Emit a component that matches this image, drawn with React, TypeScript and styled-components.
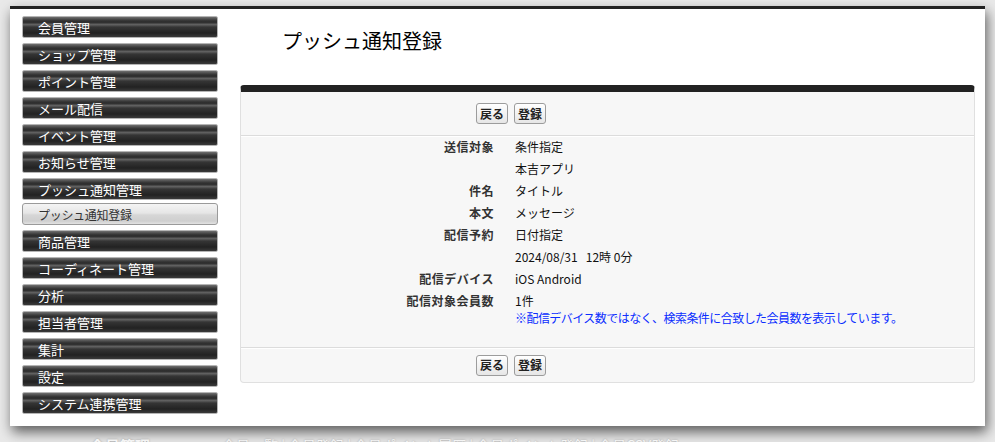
import React from "react";
import styled, { createGlobalStyle } from "styled-components";

const Global = createGlobalStyle`
  html, body { margin: 0; padding: 0; }
  body {
    background: #e9e9e9;
    font-family: "Noto Sans CJK JP", "Noto Sans", sans-serif;
    overflow: hidden;
  }
`;

const Page = styled.div`
  width: 995px;
  height: 442px;
  padding: 6px 0 0 10px;
  box-sizing: border-box;
  overflow: hidden;
`;

const Frame = styled.div`
  width: 975px;
  background: #fff;
  border-top: 3px solid #222;
  box-shadow: 2px 6px 12px rgba(0, 0, 0, 0.6);
  display: flex;
  gap: 22px;
  padding: 7px 10px 12px 12px;
  box-sizing: border-box;
`;

const Side = styled.nav`
  width: 196px;
  flex: none;
  display: flex;
  flex-direction: column;
  gap: 5px;
`;

const MenuItem = styled.div<{ $sub?: boolean }>`
  height: 22px;
  box-sizing: border-box;
  margin-top: ${(p) => (p.$sub ? "-2px" : "0")};
  border: 1px solid ${(p) => (p.$sub ? "#9a9a9a" : "#b5b5b5")};
  border-radius: ${(p) => (p.$sub ? "3px" : "2px")};
  padding-left: 15px;
  display: flex;
  align-items: center;
  white-space: nowrap;
  color: ${(p) => (p.$sub ? "#333" : "#fff")};
  font-size: ${(p) => (p.$sub ? "12px" : "13px")};
  letter-spacing: ${(p) => (p.$sub ? "-0.3px" : "0")};
  background: ${(p) =>
    p.$sub
      ? "linear-gradient(#f4f4f4 0%, #e6e6e6 45%, #d6d6d6 55%, #cfcfcf 85%, #e2e2e2 100%)"
      : "linear-gradient(#707070 0%, #3a3a3a 16%, #2a2a2a 26%, #626262 38%, #353535 50%, #222 80%, #3a3a3a 100%)"};
`;

const Main = styled.main`
  flex: 1;
  min-width: 0;
  display: flex;
  flex-direction: column;
`;

const Title = styled.h1`
  margin: 0;
  height: 69px;
  padding: 11px 0 0 42px;
  box-sizing: border-box;
  font-size: 20px;
  font-weight: normal;
  color: #000;
  line-height: 28px;
`;

const Panel = styled.section`
  background: #f7f7f7;
  border: 1px solid #e0e0e0;
  border-top: 7px solid #222;
  border-radius: 4px;
`;

const ButtonRow = styled.div<{ $bottom?: boolean }>`
  display: flex;
  gap: 6px;
  padding-left: 235px;
  align-items: center;
  height: ${(p) => (p.$bottom ? "34px" : "43px")};
  border-top: ${(p) => (p.$bottom ? "1px solid #dcdcdc" : "none")};
  border-bottom: ${(p) => (p.$bottom ? "none" : "1px solid #dcdcdc")};
  box-shadow: ${(p) => (p.$bottom ? "inset 0 1px 0 #fff" : "0 1px 0 #fff")};
`;

const Btn = styled.button`
  height: 21px;
  padding: 0 3px;
  font-family: "Noto Sans CJK JP", sans-serif;
  font-size: 12px;
  font-weight: bold;
  color: #222;
  background: linear-gradient(#ffffff, #e6e6e6);
  border: 1px solid #9c9c9c;
  border-radius: 3px;
  line-height: 18px;
`;

const Body = styled.div`
  display: grid;
  grid-template-columns: 253px 1fr;
  column-gap: 21px;
  padding: 0 0 23px 0;
  font-size: 12px;
  line-height: 22px;
  color: #111;
`;

const Label = styled.div`
  text-align: right;
  font-weight: bold;
  color: #333;
  letter-spacing: 0.5px;
`;

const Value = styled.div`
  white-space: nowrap;
`;

const Line = styled.div``;

const Note = styled.div`
  color: #0a2dff;
  line-height: 12px;
  letter-spacing: -0.55px;
`;

const Footer = styled.div`
  display: flex;
  gap: 72px;
  padding: 9px 0 0 80px;
  color: #f4f4f4;
  font-size: 14px;
  white-space: nowrap;
  text-shadow: 0 0 2px rgba(0,0,0,0.3);
`;

const FootHead = styled.span`
  font-weight: bold;
  font-size: 15px;
`;

const menu = [
  "会員管理",
  "ショップ管理",
  "ポイント管理",
  "メール配信",
  "イベント管理",
  "お知らせ管理",
  "プッシュ通知管理",
];
const menu2 = [
  "商品管理",
  "コーディネート管理",
  "分析",
  "担当者管理",
  "集計",
  "設定",
  "システム連携管理",
];

const rows: { label: string; values: React.ReactNode[] }[] = [
  { label: "送信対象", values: ["条件指定", "本吉アプリ"] },
  { label: "件名", values: ["タイトル"] },
  { label: "本文", values: ["メッセージ"] },
  { label: "配信予約", values: ["日付指定", "2024/08/31\u00a0\u00a0\u00a012時 0分"] },
  { label: "配信デバイス", values: ["iOS Android"] },
];

export default function App() {
  return (
    <>
      <Global />
      <Page>
        <Frame>
          <Side>
            {menu.map((m) => (
              <MenuItem key={m}>{m}</MenuItem>
            ))}
            <MenuItem $sub>プッシュ通知登録</MenuItem>
            {menu2.map((m) => (
              <MenuItem key={m}>{m}</MenuItem>
            ))}
          </Side>
          <Main>
            <Title>プッシュ通知登録</Title>
            <Panel>
              <ButtonRow>
                <Btn>戻る</Btn>
                <Btn>登録</Btn>
              </ButtonRow>
              <Body>
                {rows.map((r) => (
                  <React.Fragment key={r.label}>
                    <Label>{r.label}</Label>
                    <Value>
                      {r.values.map((v, i) => (
                        <Line key={i}>{v}</Line>
                      ))}
                    </Value>
                  </React.Fragment>
                ))}
                <Label>配信対象会員数</Label>
                <Value>
                  <Line>1件</Line>
                  <Note>※配信デバイス数ではなく、検索条件に合致した会員数を表示しています。</Note>
                </Value>
              </Body>
              <ButtonRow $bottom>
                <Btn>戻る</Btn>
                <Btn>登録</Btn>
              </ButtonRow>
            </Panel>
          </Main>
        </Frame>
        <Footer>
          <FootHead>会員管理</FootHead>
          <span>会員一覧 | 会員登録 | 会員ポイント履歴 | 会員ポイント登録 | 会員CSV登録</span>
        </Footer>
      </Page>
    </>
  );
}
